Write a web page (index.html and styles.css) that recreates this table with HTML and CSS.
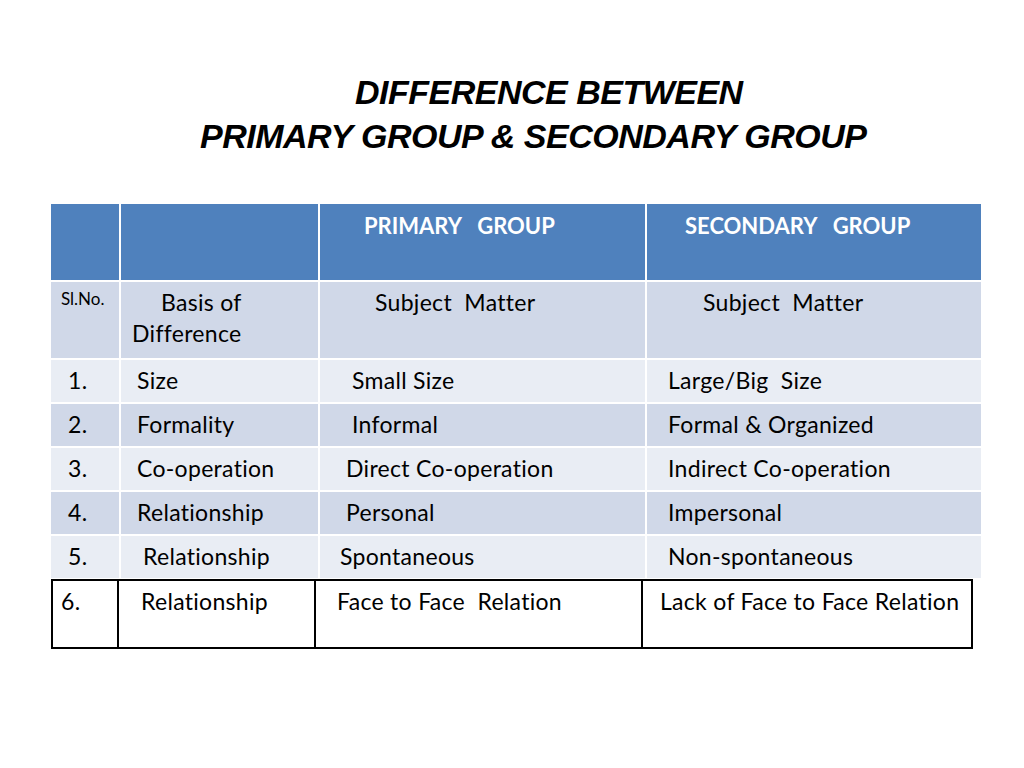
FILE: index.html
```html
<!DOCTYPE html>
<html>
<head>
<meta charset="utf-8">
<link rel="stylesheet" href="styles.css">
</head>
<body>
<div class="slide">
  <h1 class="title">
    <span class="t1">DIFFERENCE BETWEEN</span>
    <span class="t2">PRIMARY GROUP &amp; SECONDARY GROUP</span>
  </h1>

  <div class="grid">
    <div class="c hd"></div>
    <div class="c hd"></div>
    <div class="c hd p46">PRIMARY&nbsp;&nbsp; GROUP</div>
    <div class="c hd p38">SECONDARY&nbsp;&nbsp; GROUP</div>

    <div class="c dk sub slno">Sl.No.</div>
    <div class="c dk sub basis"><span class="ind">Basis of</span><br>Difference</div>
    <div class="c dk sub p55">Subject&nbsp; Matter</div>
    <div class="c dk sub p56">Subject&nbsp; Matter</div>

    <div class="c lt p17">1.</div>
    <div class="c lt p16">Size</div>
    <div class="c lt p34">Small Size</div>
    <div class="c lt p21">Large/Big&nbsp; Size</div>

    <div class="c dk p17">2.</div>
    <div class="c dk p16">Formality</div>
    <div class="c dk p32">Informal</div>
    <div class="c dk p21">Formal &amp; Organized</div>

    <div class="c lt p17">3.</div>
    <div class="c lt p16">Co-operation</div>
    <div class="c lt p26">Direct Co-operation</div>
    <div class="c lt p21">Indirect Co-operation</div>

    <div class="c dk p17">4.</div>
    <div class="c dk p16">Relationship</div>
    <div class="c dk p26">Personal</div>
    <div class="c dk p21">Impersonal</div>

    <div class="c lt p17">5.</div>
    <div class="c lt p22">Relationship</div>
    <div class="c lt p20">Spontaneous</div>
    <div class="c lt p21">Non-spontaneous</div>
  </div>

  <div class="last">
    <div class="lc p8">6.</div>
    <div class="lc p22">Relationship</div>
    <div class="lc p21">Face to Face&nbsp; Relation</div>
    <div class="lc p17">Lack of Face to Face Relation</div>
  </div>
</div>
</body>
</html>
```

FILE: styles.css
```css
html, body {
  margin: 0;
  padding: 0;
  background: #ffffff;
}

.slide {
  width: 1024px;
  height: 768px;
  position: relative;
  overflow: hidden;
  font-family: Lato, "Open Sans", "Liberation Sans", sans-serif;
  color: #000;
}

.title {
  margin: 0;
  padding-top: 70px;
  display: flex;
  flex-direction: column;
  font-family: "Liberation Sans", Arial, sans-serif;
  font-weight: bold;
  font-style: italic;
  font-size: 34px;
  line-height: 44px;
  letter-spacing: -0.5px;
}

.t1 {
  align-self: flex-start;
  margin-left: 355px;
}

.t2 {
  align-self: flex-start;
  margin-left: 200px;
}

.grid {
  margin-top: 46px;
  margin-left: 51px;
  width: 930px;
  display: grid;
  grid-template-columns: 68px 197px 325px 334px;
  grid-template-rows: 76px 76px 42px 42px 42px 42px 42px;
  gap: 2px;
  background: #ffffff;
}

.c {
  box-sizing: border-box;
  font-size: 23px;
  line-height: 28px;
  letter-spacing: 0.3px;
  padding-top: 6px;
  white-space: nowrap;
}

.hd {
  background: #4f81bd;
  color: #ffffff;
  font-weight: bold;
  font-size: 22px;
  letter-spacing: 0;
  padding-top: 8px;
}

.dk { background: #d0d8e8; }
.lt { background: #e9edf4; }

.sub { padding-top: 6px; }

.slno {
  font-size: 17px;
  letter-spacing: 0;
  padding-left: 10px;
  padding-top: 3px;
}

.basis {
  padding-left: 11px;
  line-height: 31px;
  padding-top: 5px;
}

.ind { padding-left: 29px; }

.last {
  margin-left: 51px;
  width: 922px;
  height: 70px;
  box-sizing: border-box;
  border: 2px solid #000;
  display: grid;
  grid-template-columns: 66px 197px 327px 1fr;
  margin-top: 1px;
}

.lc {
  font-size: 23px;
  line-height: 28px;
  letter-spacing: 0.3px;
  padding-top: 6px;
  white-space: nowrap;
  border-right: 2px solid #000;
}

.lc:last-child { border-right: none; }

.p8 { padding-left: 8px; }
.p16 { padding-left: 16px; }
.p17 { padding-left: 17px; }
.p20 { padding-left: 20px; }
.p21 { padding-left: 21px; }
.p22 { padding-left: 22px; }
.p26 { padding-left: 26px; }
.p32 { padding-left: 32px; }
.p34 { padding-left: 32px; }
.p38 { padding-left: 38px; }
.p46 { padding-left: 44px; }
.p55 { padding-left: 55px; }
.p56 { padding-left: 56px; }
```
